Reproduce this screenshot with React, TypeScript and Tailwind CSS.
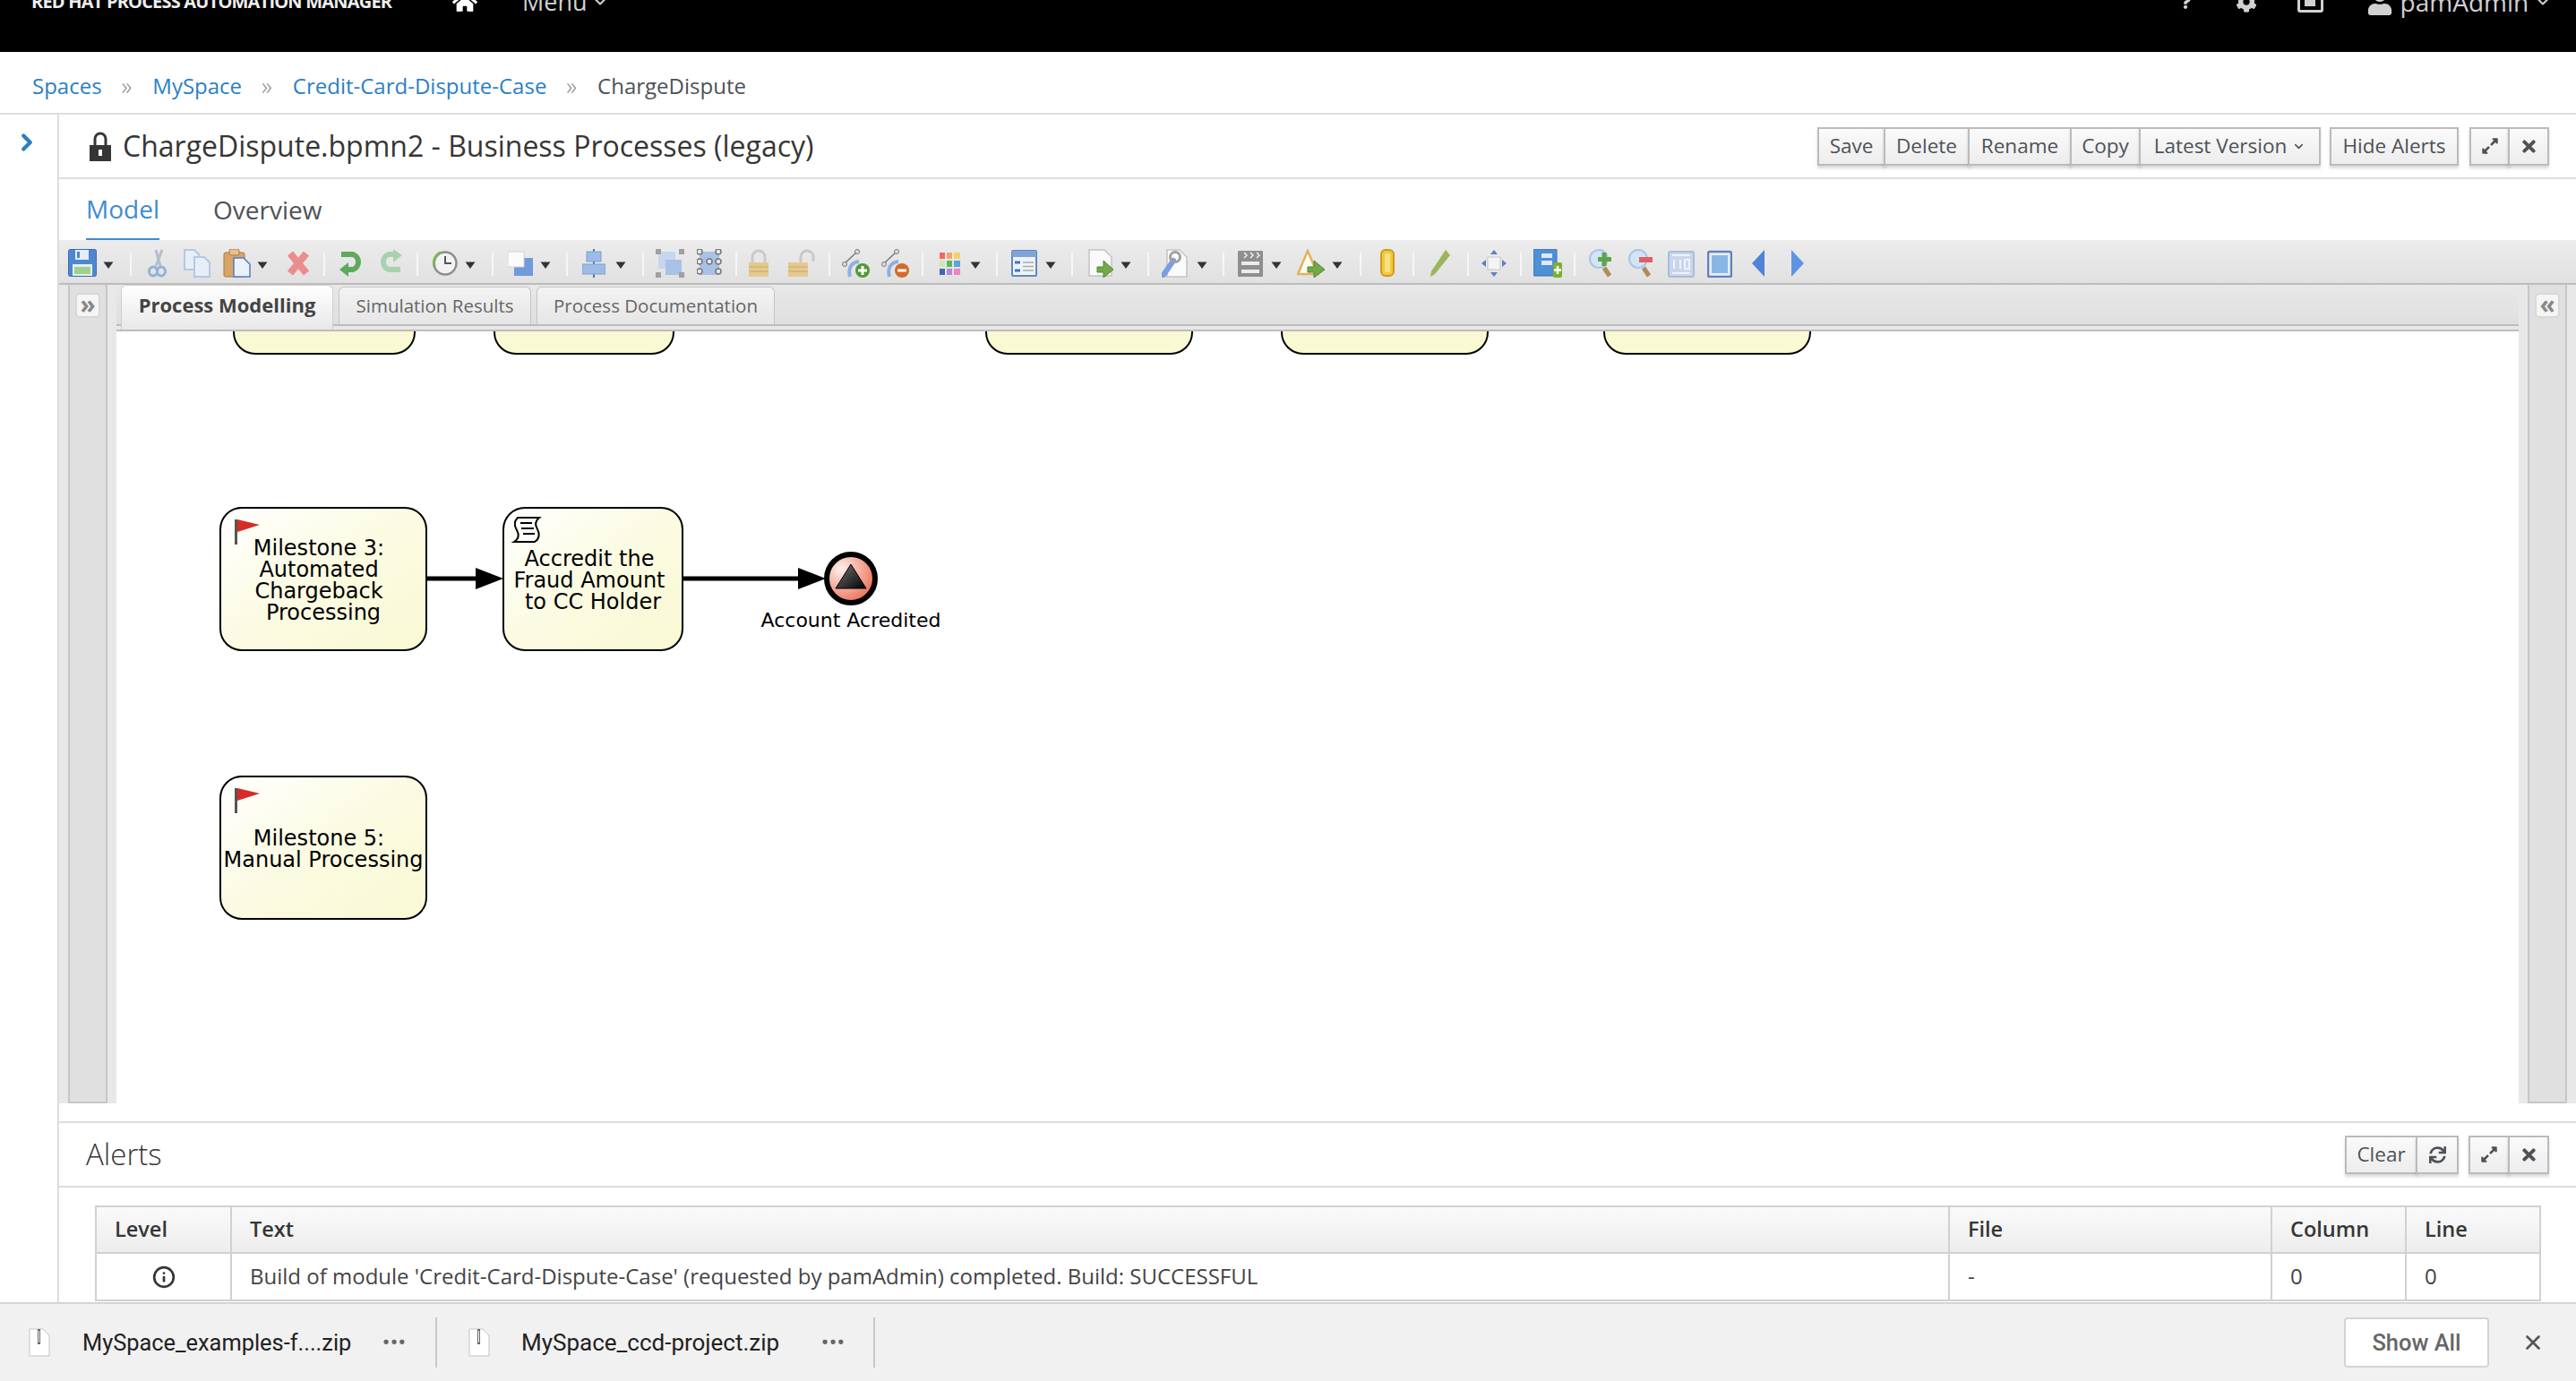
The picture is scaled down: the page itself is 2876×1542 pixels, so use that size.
import type { ReactNode } from "react";
import { FaCog, FaExpandAlt, FaHome, FaQuestion, FaSync, FaTimes, FaUser } from "react-icons/fa";
import { ChevronDown, ChevronRight, Info, X } from "lucide-react";

function T({ c, w, children }: { c: string; w: number; children: ReactNode }) {
	return (
		<svg className={`shrink-0 ${c}`} width={w} height={32} viewBox={`0 0 ${w} 32`}>
			{children}
		</svg>
	);
}

function Arrow({ c }: { c: string }) {
	return (
		<svg className={`shrink-0 overflow-visible ${c}`} width={8} height={32} viewBox="0 0 8 32">
			<path d="M-1.500 14.500h11l-5.500 7.500z" fill="#333" />
		</svg>
	);
}

function Sep({ c }: { c: string }) {
	return <div className={`mt-[4px] h-[26px] w-[2px] shrink-0 bg-[#f7f7f7] ${c}`} />;
}

function Toolbar() {
	return (
		<div className="flex h-[50px] items-start border-b-2 border-[#bcbcbc] bg-gradient-to-b from-[#ececec] to-[#e1e1e1] pt-[10px]">
			{/* Archivo */}
			<T c="ml-[10px]" w={32}>
				<rect x="0.5" y="0.5" width="31" height="30" rx="2" fill="#4f86cf" stroke="#3a6db5" />
				<rect x="8" y="1" width="15" height="11" fill="#e4edf8" />
				<rect x="10" y="3" width="3" height="7" fill="#4f86cf" />
				<rect x="5" y="17" width="22" height="13" fill="#e6f0e6" />
				<rect x="7" y="20" width="18" height="8" fill="#9fd08f" />
			</T>
			<Arrow c="ml-[9px]" />
			<Sep c="ml-[20px]" />
			<T c="ml-[17px]" w={22}>
				<path d="M17 1 10 19M10 1l5 18" stroke="#b4bfcc" strokeWidth="3" fill="none" />
				<ellipse cx="7" cy="25" rx="4.5" ry="5" fill="none" stroke="#90b2d8" strokeWidth="3" />
				<ellipse cx="16" cy="25" rx="4.5" ry="5" fill="none" stroke="#90b2d8" strokeWidth="3" />
			</T>
			<T c="ml-[19px]" w={30}>
				<path d="M1 1h11l5 5v17H1z" fill="#e6eef8" stroke="#b4c8e4" strokeWidth="2" />
				<path d="M12 9h11l6 6v16H12z" fill="#e6eef8" stroke="#b4c8e4" strokeWidth="2" />
			</T>
			<T c="ml-[14px]" w={31}>
				<rect x="1" y="4" width="23" height="27" rx="2" fill="#d8a468" stroke="#a97a42" />
				<rect x="7" y="0" width="11" height="7" rx="2" fill="#e8c08e" stroke="#a97a42" />
				<path d="M12 10h11l7 7v14H12z" fill="#eaf1fb" stroke="#4f7fc0" strokeWidth="1.5" />
			</T>
			<Arrow c="ml-[9px]" />
			<T c="ml-[23px]" w={26}>
				<path d="M4 5l18 22M22 5 4 27" stroke="#ec8d8d" strokeWidth="8" />
			</T>
			<Sep c="ml-[15px]" />
			<T c="ml-[15px]" w={29}>
				<path d="M3 6h13a9 9 0 0 1 0 17H9" fill="none" stroke="#5fa95c" strokeWidth="6" />
				<path d="M11 15 1 23l10 8z" fill="#5fa95c" />
			</T>
			<T c="ml-[15px]" w={28}>
				<path d="M25 23H12a9 9 0 0 1 0-17h7" fill="none" stroke="#a8d2af" strokeWidth="6" />
				<path d="M17 0l10 7-10 8z" fill="#a8d2af" />
			</T>
			<Sep c="ml-[15px]" />
			<T c="ml-[15px]" w={29}>
				<circle cx="15" cy="16" r="12.5" fill="#f2f2f2" stroke="#8d8d8d" strokeWidth="2.5" />
				<path d="M15 8v8h7" fill="none" stroke="#555" strokeWidth="2" />
				<path d="M3 19 A12.5 12.5 0 0 1 10 4" fill="none" stroke="#7cb35a" strokeWidth="3" />
			</T>
			<Arrow c="ml-[10px]" />
			<Sep c="ml-[20px]" />
			<T c="ml-[16px]" w={28}>
				<rect x="7" y="10" width="21" height="20" fill="#6f9adb" />
				<rect x="0" y="3" width="18" height="17" fill="#fbfbfb" stroke="#d4d4d4" />
			</T>
			<Arrow c="ml-[10px]" />
			<Sep c="ml-[19px]" />
			<T c="ml-[16px]" w={26}>
				<rect x="12" y="0" width="2" height="32" fill="#5472a8" />
				<rect x="5" y="3" width="16" height="11" fill="#9dbbe6" stroke="#7f9fd0" />
				<rect x="0" y="17" width="26" height="11" fill="#9dbbe6" stroke="#7f9fd0" />
			</T>
			<Arrow c="ml-[13px]" />
			<Sep c="ml-[20px]" />
			<T c="ml-[13px]" w={32}>
				<rect x="3" y="3" width="19" height="19" fill="#c6d6ee" />
				<rect x="11" y="12" width="18" height="17" fill="#a9c1e6" />
				<rect x="0" y="0" width="6" height="6" fill="#a0a0a0" />
				<rect x="26" y="0" width="6" height="6" fill="#a0a0a0" />
				<rect x="0" y="26" width="6" height="6" fill="#a0a0a0" />
				<rect x="26" y="26" width="6" height="6" fill="#a0a0a0" />
			</T>
			<T c="ml-[14px]" w={28}>
				<rect x="3" y="3" width="22" height="26" fill="#a9c1e6" />
				{[3, 14, 25].map((y) =>
					[3, 24].map((x) => <circle key={`${x}-${y}`} cx={x} cy={y} r="3" fill="#e8e8e8" stroke="#777" strokeWidth="1.5" />),
				)}
				<circle cx="14" cy="14" r="3" fill="#e8e8e8" stroke="#777" strokeWidth="1.5" />
			</T>
			<Sep c="ml-[15px]" />
			<T c="ml-[13px]" w={22}>
				<path d="M4 16V9a7 7 0 0 1 14 0v7" fill="none" stroke="#c9c9c9" strokeWidth="3" />
				<rect x="0" y="15" width="22" height="16" fill="#e5c98e" />
				<path d="M0 20h22M0 25h22" stroke="#c7a766" />
			</T>
			<T c="ml-[22px]" w={31}>
				<path d="M14 16V9a7 7 0 0 1 14 0v5" fill="none" stroke="#c9c9c9" strokeWidth="3" />
				<rect x="0" y="15" width="22" height="16" fill="#e5c98e" />
				<path d="M0 20h22M0 25h22" stroke="#c7a766" />
			</T>
			<Sep c="ml-[14px]" />
			<T c="ml-[13px]" w={31}>
				<path d="M2 17 17 3" stroke="#777" strokeWidth="1.5" />
				<circle cx="3" cy="17" r="2.5" fill="#ddd" stroke="#777" />
				<circle cx="17" cy="3" r="2.5" fill="#ddd" stroke="#777" />
				<path d="M9 31c-2-8 0-16 10-17" fill="none" stroke="#8db0e2" strokeWidth="4" />
				<circle cx="23" cy="24" r="8" fill="#4e9a35" />
				<path d="M23 19v10M18 24h10" stroke="#fff" strokeWidth="3" />
			</T>
			<T c="ml-[13px]" w={31}>
				<path d="M2 17 17 3" stroke="#777" strokeWidth="1.5" />
				<circle cx="3" cy="17" r="2.5" fill="#ddd" stroke="#777" />
				<circle cx="17" cy="3" r="2.5" fill="#ddd" stroke="#777" />
				<path d="M9 31c-2-8 0-16 10-17" fill="none" stroke="#8db0e2" strokeWidth="4" />
				<circle cx="23" cy="24" r="8" fill="#d66a28" />
				<path d="M18 24h10" stroke="#fff" strokeWidth="3" />
			</T>
			<Sep c="ml-[14px]" />
			<T c="ml-[18px]" w={23}>
				<rect x="0" y="4" width="6" height="7" fill="#ee6a6a" />
				<rect x="8" y="4" width="6" height="7" fill="#f4a368" />
				<rect x="16" y="4" width="7" height="7" fill="#f2d267" />
				<rect x="0" y="13" width="6" height="7" fill="#cfe6b4" />
				<rect x="8" y="13" width="6" height="7" fill="#5cb85c" />
				<rect x="16" y="13" width="7" height="7" fill="#58a6dc" />
				<rect x="0" y="22" width="6" height="7" fill="#3f68b4" />
				<rect x="8" y="22" width="6" height="7" fill="#b884d8" />
				<rect x="16" y="22" width="7" height="7" fill="#ee84c0" />
			</T>
			<Arrow c="ml-[13px]" />
			<Sep c="ml-[19px]" />
			<T c="ml-[15px]" w={29}>
				<rect x="1" y="2" width="27" height="28" rx="1" fill="#eef3fb" stroke="#5f88c4" strokeWidth="2" />
				<rect x="1" y="2" width="27" height="7" fill="#7fa3d8" />
				<path d="M4 15h6M4 24h6" stroke="#3f72bf" strokeWidth="3" />
				<path d="M13 15h12M13 24h12M13 19.500h12" stroke="#aaa" strokeWidth="1.500" />
			</T>
			<Arrow c="ml-[11px]" />
			<Sep c="ml-[19px]" />
			<T c="ml-[17px]" w={29}>
				<path d="M1 1h17l8 8v21H1z" fill="#fafafa" stroke="#c4c4c4" strokeWidth="1.500" />
				<path d="M10 20h7v-7l11 10-11 9v-6h-7z" fill="#73a84c" stroke="#4d8a2e" />
			</T>
			<Arrow c="ml-[9px]" />
			<Sep c="ml-[20px]" />
			<T c="ml-[14px]" w={30}>
				<path d="M6 1h14l8 8v22H6z" fill="#fafafa" stroke="#c4c4c4" strokeWidth="1.500" />
				<path d="M2 29 13 13" stroke="#7a9ee0" strokeWidth="6" strokeLinecap="round" />
				<circle cx="15" cy="9" r="5.500" fill="none" stroke="#a0a0a0" strokeWidth="3" />
			</T>
			<Arrow c="ml-[11px]" />
			<Sep c="ml-[19px]" />
			<T c="ml-[15px]" w={28}>
				<rect x="0" y="2" width="28" height="29" rx="1" fill="#8f8f8f" />
				<path d="M7 4l3 3-3 3M14 4l3 3-3 3M21 4l3 3-3 3" fill="none" stroke="#eee" strokeWidth="1.500" />
				<rect x="4" y="14" width="20" height="4" fill="#ececec" />
				<rect x="4" y="23" width="20" height="4" fill="#ececec" />
			</T>
			<Arrow c="ml-[11px]" />
			<T c="ml-[19px]" w={31}>
				<path d="M12 2 23 28H1z" fill="#fdfaf0" stroke="#e0b25c" strokeWidth="2.500" />
				<path d="M12 20h7v-7l12 10-12 9v-6h-7z" fill="#73a84c" stroke="#4d8a2e" />
			</T>
			<Arrow c="ml-[10px]" />
			<Sep c="ml-[21px]" />
			<T c="ml-[21px]" w={16}>
				<rect x="1" y="1" width="14" height="29" rx="5" fill="#f1c83b" stroke="#d19a1c" strokeWidth="2" />
				<rect x="5" y="5" width="6" height="21" fill="#f8e07e" />
			</T>
			<Sep c="ml-[20px]" />
			<T c="ml-[18px]" w={23}>
				<path d="M17 1l5 6L5 28l-5 3 1-6z" fill="#9db45a" />
			</T>
			<Sep c="ml-[18px]" />
			<T c="ml-[14px]" w={28}>
				<rect x="7" y="9" width="14" height="14" fill="#f4f4f4" stroke="#c8c8c8" />
				<path d="M14 1l4 5h-8zM14 31l4-5h-8zM0 16l5-4v8zM28 16l-5-4v8z" fill="#5c80bf" />
			</T>
			<Sep c="ml-[15px]" />
			<T c="ml-[13px]" w={32}>
				<rect x="0" y="0" width="26" height="30" rx="1" fill="#4f8fd4" stroke="#3a6db5" />
				<rect x="9" y="5" width="12" height="5" fill="#dbe9f8" />
				<rect x="9" y="13" width="12" height="5" fill="#dbe9f8" />
				<rect x="22" y="15" width="10" height="17" rx="2" fill="#7fb030" />
				<path d="M27 19v9M23 23.500h8" stroke="#fff" strokeWidth="2.500" />
			</T>
			<Sep c="ml-[13px]" />
			<T c="ml-[15px]" w={27}>
				<circle cx="11" cy="11" r="10" fill="#d3e4f6" stroke="#a8c5e8" strokeWidth="2" />
				<path d="M17 21l6 9" stroke="#b08a5a" strokeWidth="5" />
				<path d="M17 4v15M10 11.500h15" stroke="#5fa348" strokeWidth="5" />
			</T>
			<T c="ml-[17px]" w={27}>
				<circle cx="11" cy="11" r="10" fill="#d3e4f6" stroke="#a8c5e8" strokeWidth="2" />
				<path d="M17 21l6 9" stroke="#b08a5a" strokeWidth="5" />
				<path d="M12 12h15" stroke="#e06060" strokeWidth="6" />
			</T>
			<T c="ml-[17px]" w={30}>
				<rect x="1" y="3" width="28" height="28" rx="2" fill="#c9d6ea" stroke="#a9bcdb" strokeWidth="2" />
				<path d="M7 12v10M14 12v10M19 12h5v10h-5zM5 7h20M5 27h20" fill="none" stroke="#eef3fa" strokeWidth="2" />
			</T>
			<T c="ml-[14px]" w={28}>
				<rect x="1" y="3" width="26" height="28" rx="2" fill="#e6edf7" stroke="#5f82bb" strokeWidth="2.500" />
				<rect x="5" y="7" width="18" height="20" fill="#8ab6e6" />
			</T>
			<T c="ml-[21px]" w={16}>
				<path d="M15 1v30L1 16z" fill="#4f83d8" />
			</T>
			<T c="ml-[29px]" w={14}>
				<path d="M0 1v30l14-15z" fill="#5f94e2" />
			</T>
		</div>
	);
}

function Btn({ c, children }: { c: string; children: ReactNode }) {
	return (
		<div
			className={`-ml-[2px] flex h-[43px] items-center justify-center border-2 border-[#bbbbbb] bg-gradient-to-b from-[#fafafa] to-[#ededed] text-[22.5px] text-[#4d5258] shadow-[0_3px_3px_rgba(0,0,0,0.15)] first:ml-0 ${c}`}
		>
			{children}
		</div>
	);
}

function Flag({ y }: { y: number }) {
	return (
		<g>
			<rect x="262" y={y} width="3" height="28" fill="#555" />
			<path d={`M265 ${y}l25 6-25 8z`} fill="#d62c25" />
		</g>
	);
}

// Nodos del diagrama, en coordenadas de página (ver viewBox)
function Diagram() {
	const text = "font-['DejaVu_Sans',sans-serif] text-[24px] fill-black";
	const box = { fill: "url(#nodeFill)", stroke: "#000", strokeWidth: 2 };

	return (
		<svg className="h-full w-full" viewBox="130 370 2682 862">
			<defs>
				<linearGradient id="nodeFill" x1="0" y1="0" x2="1" y2="1">
					<stop offset="0" stopColor="#ffffff" />
					<stop offset="0.5" stopColor="#fbfbe2" />
					<stop offset="1" stopColor="#f9f9d4" />
				</linearGradient>
				<radialGradient id="endFill" cx="0.3" cy="0.3" r="0.8">
					<stop offset="0" stopColor="#fdf0ec" />
					<stop offset="1" stopColor="#ec6a50" />
				</radialGradient>
				<linearGradient id="endMark" x1="0" y1="0" x2="1" y2="1">
					<stop offset="0" stopColor="#777" />
					<stop offset="1" stopColor="#000" />
				</linearGradient>
			</defs>

			<rect x="261" y="200" width="202" height="195" rx="24" fill="#f9f9d4" stroke="#000" strokeWidth="2" />
			<rect x="552" y="200" width="200" height="195" rx="24" fill="#f9f9d4" stroke="#000" strokeWidth="2" />
			<rect x="1101" y="200" width="230" height="195" rx="24" fill="#f9f9d4" stroke="#000" strokeWidth="2" />
			<rect x="1431" y="200" width="230" height="195" rx="24" fill="#f9f9d4" stroke="#000" strokeWidth="2" />
			<rect x="1791" y="200" width="230" height="195" rx="24" fill="#f9f9d4" stroke="#000" strokeWidth="2" />

			<rect x="246" y="567" width="230" height="159" rx="24" {...box} />
			<Flag y={580} />
			<text className={text} x="356" y="620" textAnchor="middle">Milestone 3:</text>
			<text className={text} x="356" y="644" textAnchor="middle">Automated</text>
			<text className={text} x="356" y="668" textAnchor="middle">Chargeback</text>
			<text className={text} x="361" y="692" textAnchor="middle">Processing</text>

			<path d="M476 646h56" stroke="#000" strokeWidth="5" />
			<path d="M531 634l31 12-31 12z" fill="#000" />

			<rect x="562" y="567" width="200" height="159" rx="24" {...box} />
			<path
				d="M578 578h24c-5 4-5 8-2 13s2 11-3 14h-23c5-3 6-8 3-13s-3-10 1-14z"
				fill="#fff"
				stroke="#000"
				strokeWidth="2"
			/>
			<path d="M581 584h13M582 590h14M584 596h13" stroke="#000" strokeWidth="2" />
			<text className={text} x="658" y="632" textAnchor="middle">Accredit the</text>
			<text className={text} x="658" y="656" textAnchor="middle">Fraud Amount</text>
			<text className={text} x="662" y="680" textAnchor="middle">to CC Holder</text>

			<path d="M762 646h130" stroke="#000" strokeWidth="5" />
			<path d="M891 634l31 12-31 12z" fill="#000" />

			<circle cx="950" cy="646" r="27" fill="url(#endFill)" stroke="#000" strokeWidth="6" />
			<path d="M950 630l17 27h-34z" fill="url(#endMark)" stroke="#000" />
			<text className="fill-black font-['DejaVu_Sans',sans-serif] text-[22px]" x="950" y="700" textAnchor="middle">
				Account Acredited
			</text>

			<rect x="246" y="867" width="230" height="159" rx="24" {...box} />
			<Flag y={880} />
			<text className={text} x="356" y="944" textAnchor="middle">Milestone 5:</text>
			<text className={text} x="361" y="968" textAnchor="middle">Manual Processing</text>
		</svg>
	);
}

function SidePanel({ flip }: { flip?: boolean }) {
	return (
		<div className="w-[64px] shrink-0 bg-[#e8e8e8] pl-[10px]">
			<div className="flex h-full w-[44px] justify-center border-2 border-t-0 border-[#c6c6c6] bg-[#e0e0e0] pt-[9px]">
				<div className="flex h-[28px] w-[28px] items-center justify-center rounded-[5px] border-2 border-[#d8d8d8] bg-[#f5f5f5] pb-[4px] text-[28px] font-bold leading-none text-[#888]">
					{flip ? "«" : "»"}
				</div>
			</div>
		</div>
	);
}

function FileIcon() {
	return (
		<svg width="24" height="32" viewBox="0 0 24 32">
			<path d="M1 1h15l7 7v23H1z" fill="#fff" stroke="#c4c4c4" />
			<rect x="10" y="1" width="3" height="17" fill="#666" />
			<rect x="11" y="3" width="1" height="13" fill="#fff" />
		</svg>
	);
}

function Dots() {
	return <div className="text-[22px] font-bold leading-none tracking-[1px] text-[#666]">•••</div>;
}

export default function App() {
	return (
		<div className="flex h-[1542px] w-[2876px] flex-col overflow-hidden bg-white font-['Open_Sans',sans-serif] text-[#363636]">
			{/* Barra superior, cortada por arriba */}
			<div className="h-[58px] shrink-0 overflow-hidden bg-black text-white">
				<div className="-mt-[11px] flex h-[26px] items-center">
					<span className="ml-[35px] w-[401px] whitespace-nowrap text-[20px] font-bold tracking-[-0.8px] text-[#eee]">
						RED HAT PROCESS AUTOMATION MANAGER
					</span>
					<FaHome className="ml-[69px] text-[28px]" />
					<span className="ml-[50px] text-[27px] text-[#d1d1d1]">Menu</span>
					<ChevronDown className="ml-[4px] h-[20px] w-[20px] text-[#d1d1d1]" strokeWidth={2.5} />
					<FaQuestion className="ml-[1752px] text-[16px] text-[#d1d1d1]" />
					<FaCog className="ml-[48px] text-[24px] text-[#d1d1d1]" />
					<div className="ml-[45px] flex h-[24px] w-[29px] justify-center rounded-[3px] border-[3px] border-[#d1d1d1]">
						<div className="h-[14px] w-[12px] bg-[#d1d1d1]" />
					</div>
					<FaUser className="ml-[48px] text-[30px] text-[#d1d1d1]" />
					<span className="ml-[8px] text-[28px] text-[#d1d1d1]">pamAdmin</span>
					<ChevronDown className="ml-[6px] h-[20px] w-[20px] text-[#d1d1d1]" strokeWidth={2.5} />
				</div>
			</div>

			{/* Migas */}
			<div className="flex h-[70px] shrink-0 items-center border-b-2 border-[#dddddd] pl-[36px] pt-[7px] text-[24px]">
				<span className="text-[#2b7fc4]">Spaces</span>
				<span className="ml-[22px] text-[27px] font-light leading-none text-[#8a8a8a]">»</span>
				<span className="ml-[23px] text-[#2b7fc4]">MySpace</span>
				<span className="ml-[22px] text-[27px] font-light leading-none text-[#8a8a8a]">»</span>
				<span className="ml-[23px] text-[#2b7fc4]">Credit-Card-Dispute-Case</span>
				<span className="ml-[22px] text-[27px] font-light leading-none text-[#8a8a8a]">»</span>
				<span className="ml-[23px] text-[#4d5258]">ChargeDispute</span>
			</div>

			<div className="flex min-h-0 flex-1">
				<div className="w-[66px] shrink-0 border-r-2 border-[#dddddd] pl-[15px] pt-[16px]">
					<ChevronRight className="h-[30px] w-[30px] text-[#2b7fc4]" strokeWidth={3.5} />
				</div>

				<div className="flex min-w-0 flex-1 flex-col">
					{/* Título y acciones */}
					<div className="flex h-[72px] shrink-0 items-center border-b-2 border-[#dddddd] pr-[30px]">
						<svg className="ml-[34px]" width="24" height="33" viewBox="0 0 24 33">
							<path d="M6 16V8a6 6 0 0 1 12 0v8" fill="none" stroke="#363636" strokeWidth="3" />
							<rect x="0" y="15" width="24" height="18" fill="#363636" />
							<rect x="10" y="20" width="4" height="7" fill="#fff" />
						</svg>
						<span className="ml-[13px] text-[32px] text-[#363636]">ChargeDispute.bpmn2 - Business Processes (legacy)</span>
						<div className="ml-auto flex">
							<Btn c="w-[76px]">Save</Btn>
							<Btn c="w-[96px]">Delete</Btn>
							<Btn c="w-[116px]">Rename</Btn>
							<Btn c="w-[79px]">Copy</Btn>
							<Btn c="w-[203px] gap-[6px]">
								Latest Version
								<ChevronDown className="h-[15px] w-[15px]" strokeWidth={2.5} />
							</Btn>
						</div>
						<Btn c="ml-[10px] w-[144px]">Hide Alerts</Btn>
						<div className="ml-[12px] flex">
							<Btn c="w-[45px]"><FaExpandAlt className="text-[20px]" /></Btn>
							<Btn c="w-[46px]"><FaTimes className="text-[21px]" /></Btn>
						</div>
					</div>

					{/* Pestañas */}
					<div className="flex h-[68px] shrink-0 items-start pl-[30px] text-[28px]">
						<div className="flex h-[70px] w-[82px] items-center justify-center border-b-4 border-[#3f8bd0] text-[#3f8bd0]">
							Model
						</div>
						<div className="ml-[60px] flex h-[68px] items-center text-[#4d5258]">Overview</div>
					</div>

					<Toolbar />

					{/* Editor */}
					<div className="flex h-[936px] shrink-0 flex-col border-b-2 border-[#dddddd]">
						<div className="flex h-[914px] shrink-0">
							<SidePanel />
							<div className="flex w-[2682px] shrink-0 flex-col">
								<div className="relative h-[52px] shrink-0 bg-[#e8e8e8]">
									<div className="flex h-[46px] items-end gap-[6px] border-b-2 border-[#bcbcbc] bg-gradient-to-b from-[#e8e8e8] to-[#dfdfdf] pl-[5px] text-[20.5px] text-[#666]">
										<div className="z-10 -mb-[6px] flex h-[50px] w-[237px] items-center justify-center rounded-t-[6px] border border-b-0 border-[#cfcfcf] bg-gradient-to-b from-[#ffffff] to-[#e8e8e8] pb-[6px] text-[22px] font-bold text-[#444]">
											Process Modelling
										</div>
										<div className="flex h-[42px] w-[215px] items-center justify-center rounded-t-[6px] border border-b-0 border-[#c4c4c4] bg-gradient-to-b from-[#f3f3f3] to-[#e6e6e6]">
											Simulation Results
										</div>
										<div className="flex h-[42px] w-[266px] items-center justify-center rounded-t-[6px] border border-b-0 border-[#c4c4c4] bg-gradient-to-b from-[#f3f3f3] to-[#e6e6e6]">
											Process Documentation
										</div>
									</div>
									<div className="absolute bottom-0 left-0 right-0 h-[2px] bg-[#bcbcbc]" />
								</div>
								<div className="min-h-0 flex-1 bg-white">
									<Diagram />
								</div>
							</div>
							<SidePanel flip />
						</div>
					</div>

					{/* Alertas */}
					<div className="flex h-[72px] shrink-0 items-center border-b-2 border-[#dddddd] pl-[30px] pr-[30px]">
						<span className="text-[33px] font-light text-[#363636]">Alerts</span>
						<div className="ml-auto flex">
							<Btn c="w-[81px]">Clear</Btn>
							<Btn c="w-[48px]"><FaSync className="text-[19px]" /></Btn>
						</div>
						<div className="ml-[11px] flex">
							<Btn c="w-[46px]"><FaExpandAlt className="text-[20px]" /></Btn>
							<Btn c="w-[46px]"><FaTimes className="text-[21px]" /></Btn>
						</div>
					</div>

					<div className="pl-[40px] pt-[20px]">
						<table className="w-[2729px] table-fixed border-collapse border-2 border-[#d1d1d1] text-[24px] text-[#444]">
							<colgroup>
								<col className="w-[151px]" />
								<col className="w-[1918px]" />
								<col className="w-[360px]" />
								<col className="w-[150px]" />
								<col className="w-[150px]" />
							</colgroup>
							<thead>
								<tr className="h-[52px] bg-gradient-to-b from-[#fafafa] to-[#ededed] text-left text-[23.5px] text-[#363636]">
									<th className="border-2 border-[#d1d1d1] px-[20px] pb-[1px] font-semibold">Level</th>
									<th className="border-2 border-[#d1d1d1] px-[20px] pb-[1px] font-semibold">Text</th>
									<th className="border-2 border-[#d1d1d1] px-[20px] pb-[1px] font-semibold">File</th>
									<th className="border-2 border-[#d1d1d1] px-[20px] pb-[1px] font-semibold">Column</th>
									<th className="border-2 border-[#d1d1d1] px-[20px] pb-[1px] font-semibold">Line</th>
								</tr>
							</thead>
							<tbody>
								<tr className="h-[53px]">
									<td className="border-2 border-[#d1d1d1]">
										<Info className="mx-auto h-[26px] w-[26px] text-[#363636]" strokeWidth={2.5} />
									</td>
									<td className="border-2 border-[#d1d1d1] px-[20px] pb-[1px]">
										Build of module 'Credit-Card-Dispute-Case' (requested by pamAdmin) completed. Build: SUCCESSFUL
									</td>
									<td className="border-2 border-[#d1d1d1] px-[20px] pb-[1px]">-</td>
									<td className="border-2 border-[#d1d1d1] px-[20px] pb-[1px]">0</td>
									<td className="border-2 border-[#d1d1d1] px-[20px] pb-[1px]">0</td>
								</tr>
							</tbody>
						</table>
					</div>
				</div>
			</div>

			{/* Barra de descargas */}
			<div className="flex h-[88px] shrink-0 items-center border-t-2 border-[#d4d4d4] bg-[#f1f1f1] font-['Roboto',sans-serif] text-[26px] text-[#222]">
				<div className="ml-[32px]"><FileIcon /></div>
				<span className="ml-[36px] w-[298px] whitespace-nowrap text-[25.4px]">MySpace_examples-f....zip</span>
				<div className="ml-[37px] w-[24px]"><Dots /></div>
				<div className="ml-[35px] h-[56px] w-[2px] bg-[#c8c8c8]" />
				<div className="ml-[35px]"><FileIcon /></div>
				<span className="ml-[35px] w-[288px] whitespace-nowrap">MySpace_ccd-project.zip</span>
				<div className="ml-[47px] w-[24px]"><Dots /></div>
				<div className="ml-[34px] h-[56px] w-[2px] bg-[#c8c8c8]" />
				<div className="ml-auto flex h-[56px] w-[162px] items-center justify-center rounded-[4px] border-2 border-[#d4d4d4] bg-white text-[25.5px] font-medium text-[#666]">
					Show All
				</div>
				<X className="ml-[36px] mr-[35px] h-[26px] w-[26px] text-[#555]" strokeWidth={2.5} />
			</div>
		</div>
	);
}
